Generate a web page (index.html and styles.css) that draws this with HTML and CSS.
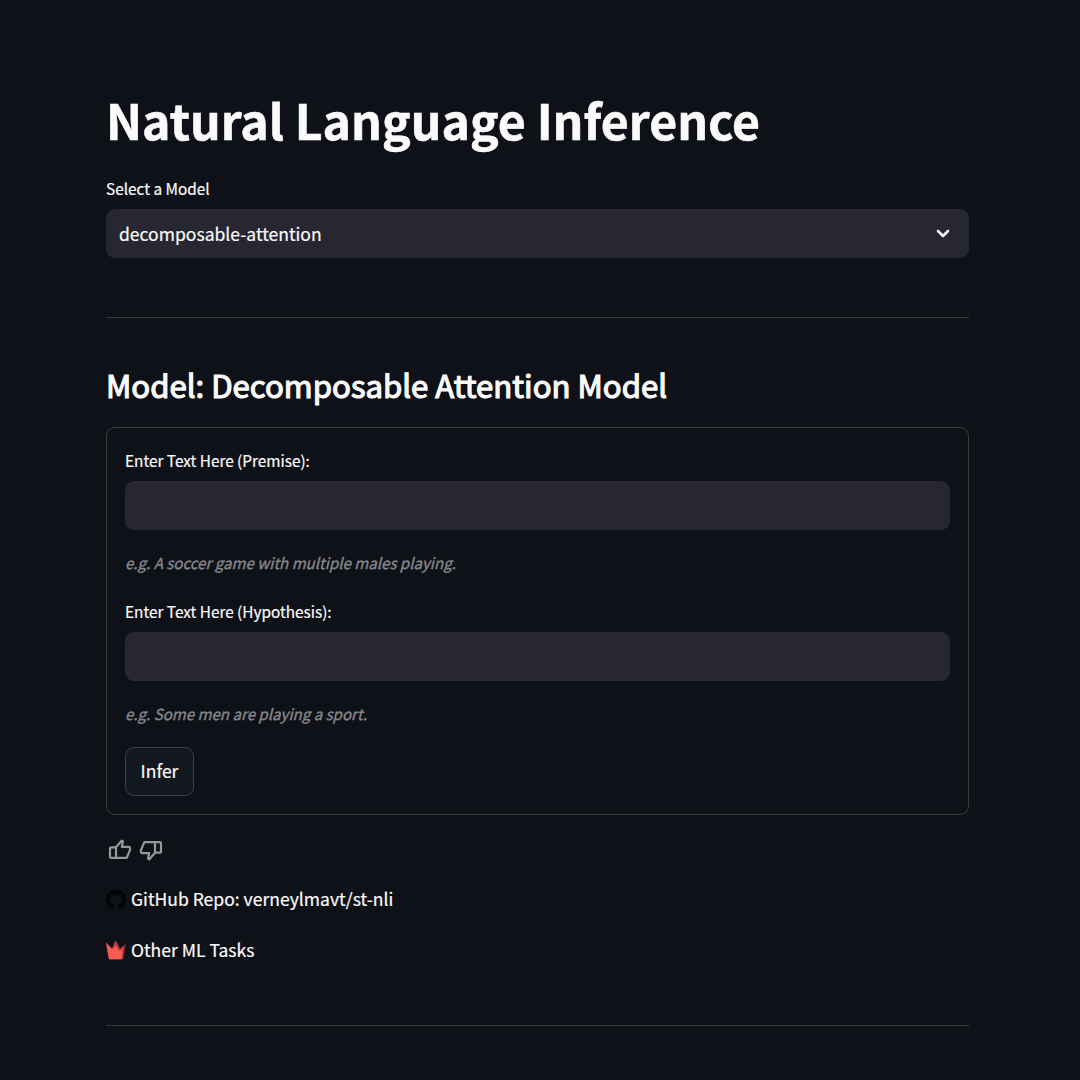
FILE: index.html
```html
<!DOCTYPE html>
<html lang="en">
<head>
<meta charset="utf-8">
<title>Natural Language Inference</title>
<link rel="stylesheet" href="styles.css">
</head>
<body>
<main class="page">
  <h1 class="title"><span>Natural Language Inference</span></h1>
  <div class="label label-select"><span>Select a Model</span></div>
  <div class="select"><span>decomposable-attention</span>
    <svg class="chevron" viewBox="0 0 14 10"><path d="M2 2l5 5 5-5" fill="none" stroke="#fafafa" stroke-width="2.6" stroke-linecap="round" stroke-linejoin="round"/></svg>
  </div>
  <hr class="rule">
  <h2 class="subtitle"><span>Model: Decomposable Attention Model</span></h2>
  <form class="form">
    <label class="label" for="premise"><span>Enter Text Here (Premise):</span></label>
    <input class="input" id="premise" type="text">
    <p class="hint"><span>e.g. A soccer game with multiple males playing.</span></p>
    <label class="label" for="hypothesis"><span>Enter Text Here (Hypothesis):</span></label>
    <input class="input" id="hypothesis" type="text">
    <p class="hint"><span>e.g. Some men are playing a sport.</span></p>
    <button class="button" type="button"><span>Infer</span></button>
  </form>
  <div class="feedback">
    <svg viewBox="0 0 24 24"><path d="M8 9.2v10.6h10c.5 0 .8-.2 1-.6l2.8-6.8c.1-.2.2-.4.2-.6V10c0-.7-.5-1.2-1.2-1.2h-7L15 3.4 13.8 2.6zM8 9.3H3.2c-.7 0-1.2.5-1.2 1.2v8.1c0 .7.5 1.2 1.2 1.2H8"/></svg>
    <svg viewBox="0 0 24 24"><path transform="rotate(180 12 12)" d="M8 9.2v10.6h10c.5 0 .8-.2 1-.6l2.8-6.8c.1-.2.2-.4.2-.6V10c0-.7-.5-1.2-1.2-1.2h-7L15 3.4 13.8 2.6zM8 9.3H3.2c-.7 0-1.2.5-1.2 1.2v8.1c0 .7.5 1.2 1.2 1.2H8"/></svg>
  </div>
  <a class="link">
    <svg viewBox="0 0 16 16"><path fill="#030407" d="M8 0C3.58 0 0 3.58 0 8c0 3.54 2.29 6.53 5.47 7.59.4.07.55-.17.55-.38 0-.19-.01-.82-.01-1.49-2.01.37-2.53-.49-2.69-.94-.09-.23-.48-.94-.82-1.13-.28-.15-.68-.52-.01-.53.63-.01 1.08.58 1.23.82.72 1.21 1.87.87 2.33.66.07-.52.28-.87.51-1.07-1.78-.2-3.64-.89-3.64-3.95 0-.87.31-1.59.82-2.15-.08-.2-.36-1.02.08-2.12 0 0 .67-.21 2.2.82a7.5 7.5 0 0 1 4 0c1.53-1.04 2.2-.82 2.2-.82.44 1.1.16 1.92.08 2.12.51.56.82 1.27.82 2.15 0 3.07-1.87 3.75-3.65 3.95.29.25.54.73.54 1.48 0 1.07-.01 1.93-.01 2.2 0 .21.15.46.55.38A8 8 0 0 0 16 8c0-4.42-3.58-8-8-8z"/></svg>
    <span>GitHub Repo: verneylmavt/st-nli</span>
  </a>
  <a class="link link-tasks">
    <svg viewBox="0 0 20 20"><path fill="#7b2f35" d="M14.5 9L20 3.2l-2.6 15.6-3 .4z"/><path fill="#c8403f" d="M0 2.6L5 11 9.7.2 14 9l4-3.6-1.8 13.8H3z"/><path fill="#f75c50" d="M0 2.6L6.6 9.6 9.9 6l3.4 5.2 2.9-2.4-.6 10.5H3z"/></svg>
    <span>Other ML Tasks</span>
  </a>
  <hr class="rule rule-end">
</main>
</body>
</html>
```
FILE: styles.css
```css
* { box-sizing: border-box; }
body {
  margin: 0;
  height: 1080px;
  overflow: hidden;
  background: #0f1118;
  color: #fafafa;
  font-family: "Noto Sans CJK SC", "Noto Sans", sans-serif;
  font-size: 17.55px;
  -webkit-text-stroke: 0.2px;
}
.page { width: 863px; margin-left: 106px; padding-top: 87px; }
.title { margin: 0; height: 64px; line-height: 64px; font-size: 48.2px; font-weight: 700; -webkit-text-stroke: 0.6px; }
.label { display: block; margin-top: 20px; height: 24px; line-height: 24px; font-size: 15.35px; }
.label-select { margin-top: 25px; }
.select {
  display: flex; align-items: center; justify-content: space-between;
  height: 49px; margin-top: 9px; padding: 0 19px 0 13px;
  border-radius: 9px; background: #262730;
}
.chevron { width: 14px; height: 10px; }
.rule { height: 0; margin: 59px 0 0; border: 0; border-top: 1px solid #37393e; }
.subtitle { margin: 46px 0 0; height: 42px; line-height: 42px; font-size: 31.15px; font-weight: 400; -webkit-text-stroke: 1.2px; }
.form {
  display: flex; flex-direction: column; align-items: flex-start;
  height: 388px; margin-top: 21px; padding: 0 18px;
  border: 1px solid #3b3d42; border-radius: 9px;
}
.input {
  width: 100%; height: 49px; margin-top: 9px; padding: 0 14px;
  border: 0; border-radius: 9px; background: #262730; color: inherit; font: inherit;
}
.hint { margin: 20px 0 0; height: 24px; line-height: 24px; font-size: 15.1px; font-style: italic; color: #86878b; -webkit-text-stroke: 0.35px; }
.hint + .label { margin-top: 25px; }
.button {
  margin-top: 22px; width: 69px; height: 49px; padding: 0 0 2px;
  border: 1px solid #3d4045; border-radius: 9px;
  background: #131720; color: inherit; font: inherit;
}
.feedback { display: flex; gap: 7px; height: 24px; margin: 23px 0 0 2px; }
.feedback svg { width: 24px; height: 24px; fill: none; stroke: #97989b; stroke-width: 2.2; stroke-linejoin: round; }
.link { display: flex; align-items: center; gap: 5px; height: 28px; margin-top: 24px; }
.link span { position: relative; top: -2px; }
.link-tasks { margin-top: 23px; }
.link svg { width: 20px; height: 20px; }
.link-tasks svg { margin-top: -2px; }
.rule-end { margin-top: 60px; }
```
